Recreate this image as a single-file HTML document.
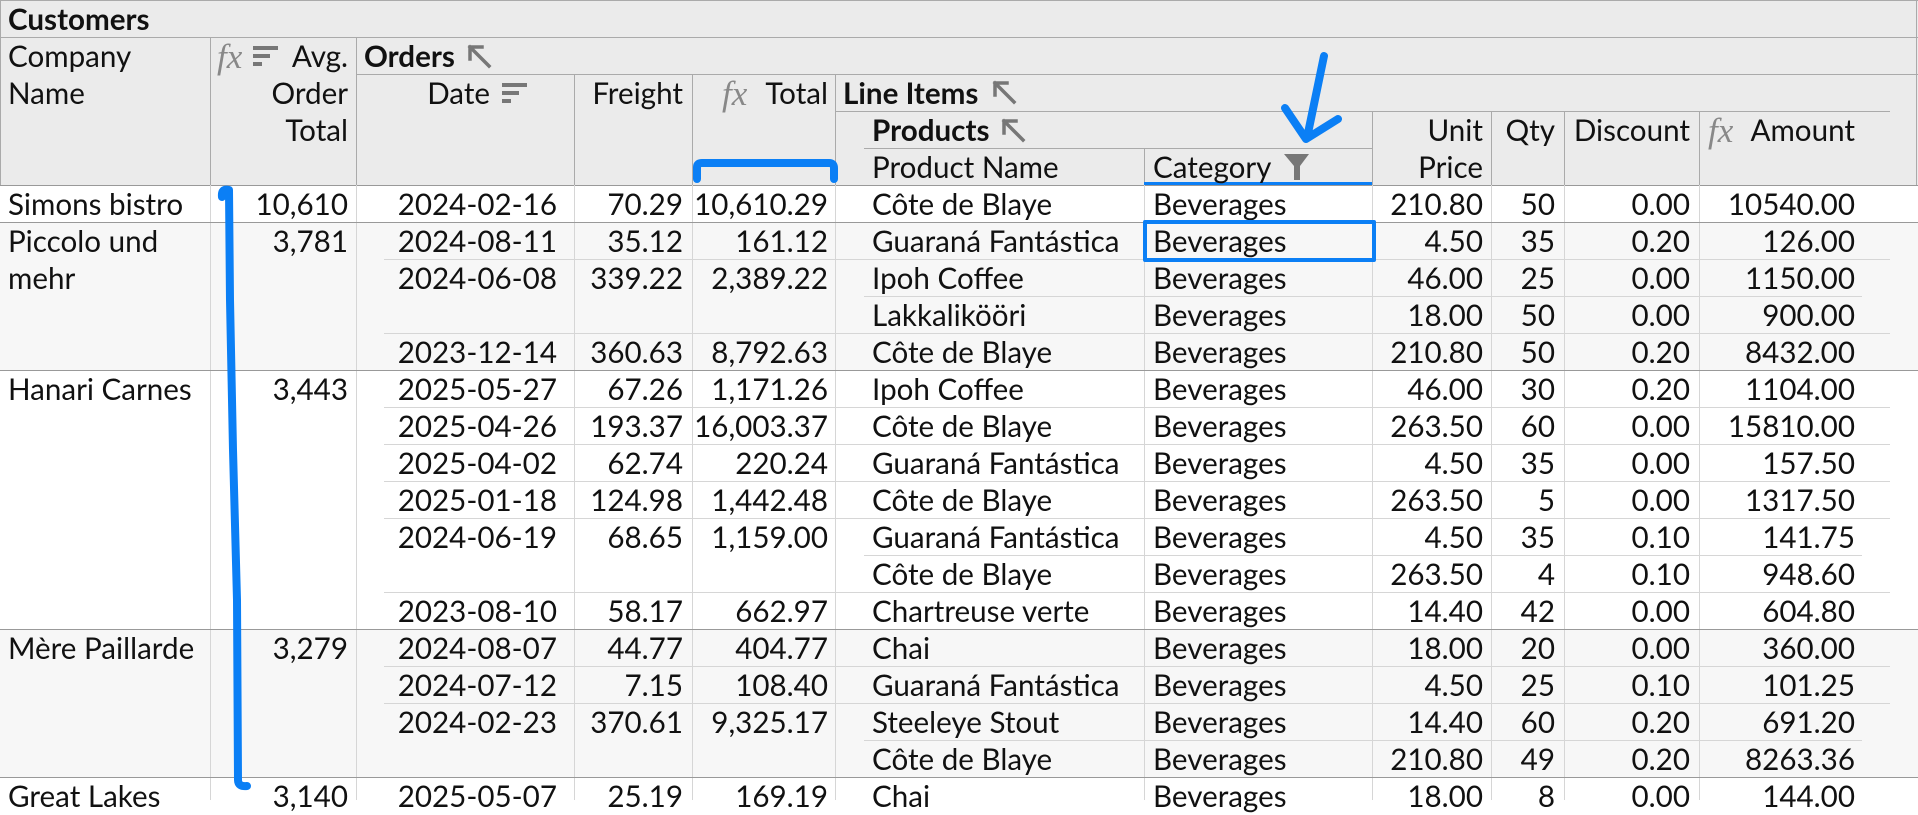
<!DOCTYPE html>
<html><head><meta charset="utf-8"><style>
*{margin:0;padding:0;box-sizing:border-box}
body{width:1918px;height:800px;overflow:hidden;background:#fff;font-family:"Lato","Liberation Sans",sans-serif;font-size:29.6px;color:#111;position:relative}
.a{position:absolute}
.r{position:absolute;left:0;width:1918px;height:37px}
.r span,.h{position:absolute;top:0;height:37px;line-height:37px;padding-top:1px;white-space:nowrap}
.b{font-weight:bold}
.c0{left:8px}.c1{right:1570px}.c2{right:1361px}.c3{right:1235px}.c4{right:1090px}
.c5{left:872px}.c6{left:1153px}.c7{right:435px}.c8{right:363px}.c9{right:228px}.c10{right:63px}
.g{background:#f7f7f7}
.fx{font-family:"Liberation Serif",serif;font-style:italic;color:#888;font-size:35px}
.hl{position:absolute;height:1px;background:#aaa}
.vl{position:absolute;width:1px;background:#aaa}
.il{position:absolute;height:1px;background:#d6d6d6}
.dl{position:absolute;width:1px;background:#d6d6d6;top:185px;height:615px}
</style></head><body>
<div class="a" style="left:0;top:0;width:1918px;height:185px;background:#ebebeb"></div>
<div class="a g" style="left:0;top:222px;width:1918px;height:148px"></div>
<div class="a g" style="left:0;top:629px;width:1918px;height:148px"></div>

<div class="hl" style="left:0;top:0;width:1918px"></div>
<div class="vl" style="left:0;top:0;height:185px"></div>
<div class="vl" style="left:1916px;top:0;height:185px"></div>
<div class="hl" style="left:0;top:37px;width:1918px"></div>
<div class="hl" style="left:356px;top:74px;width:1562px"></div>
<div class="hl" style="left:835px;top:111px;width:1055px"></div>
<div class="hl" style="left:864px;top:148px;width:508px"></div>
<div class="hl" style="left:0;top:185px;width:1918px;background:#999"></div>
<div class="vl" style="left:210px;top:37px;height:148px"></div>
<div class="vl" style="left:356px;top:37px;height:148px"></div>
<div class="vl" style="left:574px;top:74px;height:111px"></div>
<div class="vl" style="left:692px;top:74px;height:111px"></div>
<div class="vl" style="left:835px;top:74px;height:111px"></div>
<div class="vl" style="left:1144px;top:148px;height:37px"></div>
<div class="vl" style="left:1372px;top:111px;height:74px"></div>
<div class="vl" style="left:1491px;top:111px;height:74px"></div>
<div class="vl" style="left:1564px;top:111px;height:74px"></div>
<div class="vl" style="left:1699px;top:111px;height:74px"></div>
<div class="a" style="left:1144px;top:182px;width:228px;height:3px;background:#0b7ff5"></div>

<div class="dl" style="left:210px"></div><div class="dl" style="left:356px"></div>
<div class="dl" style="left:574px"></div><div class="dl" style="left:692px"></div>
<div class="dl" style="left:835px"></div><div class="dl" style="left:1144px"></div>
<div class="dl" style="left:1372px"></div><div class="dl" style="left:1491px"></div>
<div class="dl" style="left:1564px"></div><div class="dl" style="left:1699px"></div>

<div class="hl" style="left:0;top:222px;width:1918px;background:#999"></div>
<div class="hl" style="left:0;top:370px;width:1918px;background:#999"></div>
<div class="hl" style="left:0;top:629px;width:1918px;background:#999"></div>
<div class="hl" style="left:0;top:777px;width:1918px;background:#999"></div>
<div class="il" style="left:384px;top:259px;width:1506px"></div>
<div class="il" style="left:384px;top:333px;width:1506px"></div>
<div class="il" style="left:384px;top:407px;width:1506px"></div>
<div class="il" style="left:384px;top:444px;width:1506px"></div>
<div class="il" style="left:384px;top:481px;width:1506px"></div>
<div class="il" style="left:384px;top:518px;width:1506px"></div>
<div class="il" style="left:384px;top:592px;width:1506px"></div>
<div class="il" style="left:384px;top:666px;width:1506px"></div>
<div class="il" style="left:384px;top:703px;width:1506px"></div>
<div class="il" style="left:864px;top:296px;width:998px"></div>
<div class="il" style="left:864px;top:555px;width:998px"></div>
<div class="il" style="left:864px;top:740px;width:998px"></div>

<div class="h b" style="left:8px;top:0">Customers</div>
<div class="h" style="left:8px;top:37px">Company</div>
<div class="h" style="left:8px;top:74px">Name</div>
<div class="h fx" style="left:217px;top:37px">fx</div>
<div class="a" style="left:253px;top:46px;width:25px;height:4px;background:#777"></div>
<div class="a" style="left:253px;top:54px;width:17px;height:4px;background:#777"></div>
<div class="a" style="left:253px;top:62px;width:9px;height:4px;background:#777"></div>
<div class="h" style="right:1570px;top:37px">Avg.</div>
<div class="h" style="right:1570px;top:74px">Order</div>
<div class="h" style="right:1570px;top:111px">Total</div>
<div class="h b" style="left:364px;top:37px">Orders</div>
<div class="h" style="right:1428px;top:74px">Date</div>
<div class="a" style="left:502px;top:83px;width:25px;height:4px;background:#777"></div>
<div class="a" style="left:502px;top:91px;width:17px;height:4px;background:#777"></div>
<div class="a" style="left:502px;top:99px;width:9px;height:4px;background:#777"></div>
<div class="h" style="right:1235px;top:74px">Freight</div>
<div class="h fx" style="left:722px;top:74px">fx</div>
<div class="h" style="right:1090px;top:74px">Total</div>
<div class="h b" style="left:843px;top:74px">Line Items</div>
<div class="h b" style="left:872px;top:111px">Products</div>
<div class="h" style="left:872px;top:148px">Product Name</div>
<div class="h" style="left:1153px;top:148px">Category</div>
<div class="h" style="right:435px;top:111px">Unit</div>
<div class="h" style="right:435px;top:148px">Price</div>
<div class="h" style="right:363px;top:111px">Qty</div>
<div class="h" style="right:228px;top:111px">Discount</div>
<div class="h fx" style="left:1708px;top:111px">fx</div>
<div class="h" style="right:63px;top:111px">Amount</div>

<div class="r" style="top:185px"><span class="c0">Simons bistro</span><span class="c1">10,610</span><span class="c2">2024-02-16</span><span class="c3">70.29</span><span class="c4">10,610.29</span><span class="c5">Côte de Blaye</span><span class="c6">Beverages</span><span class="c7">210.80</span><span class="c8">50</span><span class="c9">0.00</span><span class="c10">10540.00</span></div>
<div class="r" style="top:222px"><span class="c0">Piccolo und</span><span class="c1">3,781</span><span class="c2">2024-08-11</span><span class="c3">35.12</span><span class="c4">161.12</span><span class="c5">Guaraná Fantástica</span><span class="c6">Beverages</span><span class="c7">4.50</span><span class="c8">35</span><span class="c9">0.20</span><span class="c10">126.00</span></div>
<div class="r" style="top:259px"><span class="c0">mehr</span><span class="c2">2024-06-08</span><span class="c3">339.22</span><span class="c4">2,389.22</span><span class="c5">Ipoh Coffee</span><span class="c6">Beverages</span><span class="c7">46.00</span><span class="c8">25</span><span class="c9">0.00</span><span class="c10">1150.00</span></div>
<div class="r" style="top:296px"><span class="c5">Lakkalikööri</span><span class="c6">Beverages</span><span class="c7">18.00</span><span class="c8">50</span><span class="c9">0.00</span><span class="c10">900.00</span></div>
<div class="r" style="top:333px"><span class="c2">2023-12-14</span><span class="c3">360.63</span><span class="c4">8,792.63</span><span class="c5">Côte de Blaye</span><span class="c6">Beverages</span><span class="c7">210.80</span><span class="c8">50</span><span class="c9">0.20</span><span class="c10">8432.00</span></div>
<div class="r" style="top:370px"><span class="c0">Hanari Carnes</span><span class="c1">3,443</span><span class="c2">2025-05-27</span><span class="c3">67.26</span><span class="c4">1,171.26</span><span class="c5">Ipoh Coffee</span><span class="c6">Beverages</span><span class="c7">46.00</span><span class="c8">30</span><span class="c9">0.20</span><span class="c10">1104.00</span></div>
<div class="r" style="top:407px"><span class="c2">2025-04-26</span><span class="c3">193.37</span><span class="c4">16,003.37</span><span class="c5">Côte de Blaye</span><span class="c6">Beverages</span><span class="c7">263.50</span><span class="c8">60</span><span class="c9">0.00</span><span class="c10">15810.00</span></div>
<div class="r" style="top:444px"><span class="c2">2025-04-02</span><span class="c3">62.74</span><span class="c4">220.24</span><span class="c5">Guaraná Fantástica</span><span class="c6">Beverages</span><span class="c7">4.50</span><span class="c8">35</span><span class="c9">0.00</span><span class="c10">157.50</span></div>
<div class="r" style="top:481px"><span class="c2">2025-01-18</span><span class="c3">124.98</span><span class="c4">1,442.48</span><span class="c5">Côte de Blaye</span><span class="c6">Beverages</span><span class="c7">263.50</span><span class="c8">5</span><span class="c9">0.00</span><span class="c10">1317.50</span></div>
<div class="r" style="top:518px"><span class="c2">2024-06-19</span><span class="c3">68.65</span><span class="c4">1,159.00</span><span class="c5">Guaraná Fantástica</span><span class="c6">Beverages</span><span class="c7">4.50</span><span class="c8">35</span><span class="c9">0.10</span><span class="c10">141.75</span></div>
<div class="r" style="top:555px"><span class="c5">Côte de Blaye</span><span class="c6">Beverages</span><span class="c7">263.50</span><span class="c8">4</span><span class="c9">0.10</span><span class="c10">948.60</span></div>
<div class="r" style="top:592px"><span class="c2">2023-08-10</span><span class="c3">58.17</span><span class="c4">662.97</span><span class="c5">Chartreuse verte</span><span class="c6">Beverages</span><span class="c7">14.40</span><span class="c8">42</span><span class="c9">0.00</span><span class="c10">604.80</span></div>
<div class="r" style="top:629px"><span class="c0">Mère Paillarde</span><span class="c1">3,279</span><span class="c2">2024-08-07</span><span class="c3">44.77</span><span class="c4">404.77</span><span class="c5">Chai</span><span class="c6">Beverages</span><span class="c7">18.00</span><span class="c8">20</span><span class="c9">0.00</span><span class="c10">360.00</span></div>
<div class="r" style="top:666px"><span class="c2">2024-07-12</span><span class="c3">7.15</span><span class="c4">108.40</span><span class="c5">Guaraná Fantástica</span><span class="c6">Beverages</span><span class="c7">4.50</span><span class="c8">25</span><span class="c9">0.10</span><span class="c10">101.25</span></div>
<div class="r" style="top:703px"><span class="c2">2024-02-23</span><span class="c3">370.61</span><span class="c4">9,325.17</span><span class="c5">Steeleye Stout</span><span class="c6">Beverages</span><span class="c7">14.40</span><span class="c8">60</span><span class="c9">0.20</span><span class="c10">691.20</span></div>
<div class="r" style="top:740px"><span class="c5">Côte de Blaye</span><span class="c6">Beverages</span><span class="c7">210.80</span><span class="c8">49</span><span class="c9">0.20</span><span class="c10">8263.36</span></div>
<div class="r" style="top:777px"><span class="c0">Great Lakes</span><span class="c1">3,140</span><span class="c2">2025-05-07</span><span class="c3">25.19</span><span class="c4">169.19</span><span class="c5">Chai</span><span class="c6">Beverages</span><span class="c7">18.00</span><span class="c8">8</span><span class="c9">0.00</span><span class="c10">144.00</span></div>

<svg class="a" style="left:0;top:0" width="1918" height="800" viewBox="0 0 1918 800">
<g fill="none" stroke="#777" stroke-width="3.5" stroke-linecap="square">
<path d="M489 66 L470 47 M470 47 L470 59 M470 47 L482 47"/>
<path d="M1014 102 L995 83 M995 83 L995 95 M995 83 L1007 83"/>
<path d="M1023 140 L1004 121 M1004 121 L1004 133 M1004 121 L1016 121"/>
</g>
<path d="M1284 154 L1309 154 L1300 166 L1300 180 L1294 180 L1294 166 Z" fill="#777"/>
<g fill="none" stroke="#0b7ff5" stroke-linecap="round" stroke-linejoin="round">
<path stroke-width="8" d="M697 179 L697 167 Q697 163 702 163 L829 163 Q834 163 834 168 L834 179"/>
<path stroke-width="8" d="M222 197 Q221 188 229 190 L230 300 L233 450 L237 600 L238 780 Q238 787 247 786"/>
<path stroke-width="8" d="M1324 56 L1307 138 M1285 108 L1306 139 L1338 119"/>
<rect stroke-width="4" x="1145" y="222" width="229" height="38"/>
</g>
</svg>
</body></html>
